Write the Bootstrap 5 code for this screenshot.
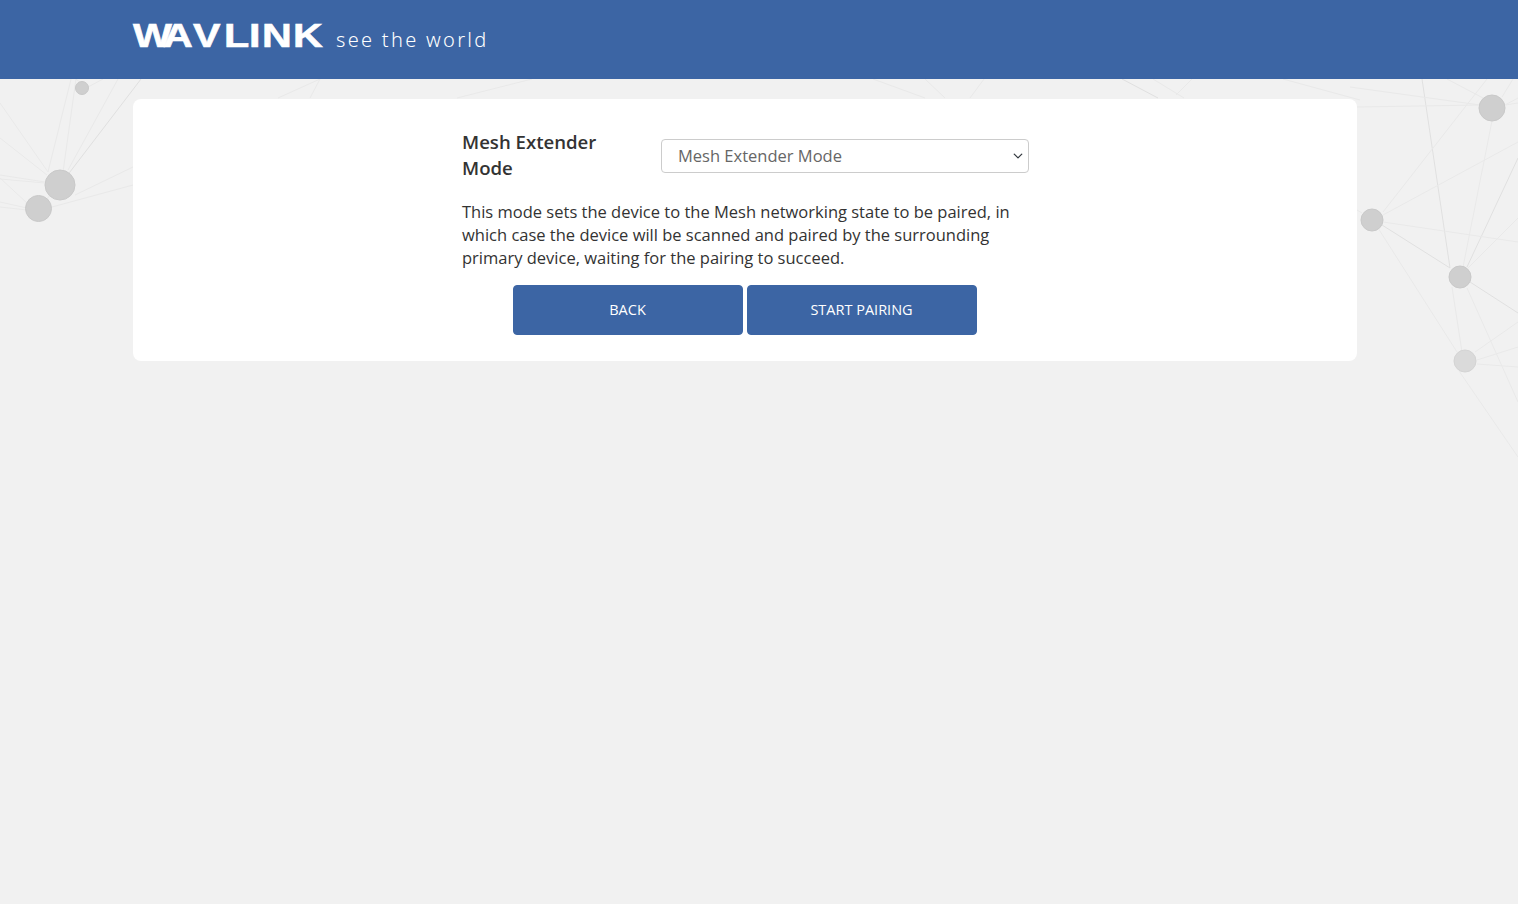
<!DOCTYPE html>
<html lang="en">
<head>
    <meta charset="UTF-8">
    <meta name="viewport" content="width=device-width, initial-scale=1.0">
    <title>Mesh Extender Mode</title>
    <link href="https://cdn.jsdelivr.net/npm/bootstrap@5.3.0/dist/css/bootstrap.min.css" rel="stylesheet">
    <style>
        body {
            background-color: #f1f1f1;
            font-family: "Open Sans", "Noto Sans", sans-serif;
            color: #333;
            min-height: 100vh;
        }
        .net-bg {
            position: absolute;
            top: 0;
            left: 0;
            width: 100%;
            height: 100%;
        }
        .net-bg line { stroke: #e9e9e9; stroke-width: 1; }
        .net-bg line.dark { stroke: #e0e0e0; }
        .net-bg circle { fill: #cfcfcf; stroke: #c9c9c9; stroke-width: 1; }
        .net-bg circle.pale { fill: #dadada; stroke: #d4d4d4; }
        .top-bar {
            height: 79px;
            background-color: #3c65a4;
        }
        .page-wrap {
            width: 1224px;
            margin-left: 133px;
        }
        .logo-mark {
            overflow: visible;
            margin-bottom: 8px;
            margin-right: 13px;
        }
        .logo-word {
            font-family: "Liberation Sans", sans-serif;
            font-weight: 700;
            font-size: 33px;
            fill: #fff;
            stroke: #fff;
            stroke-width: .6px;
        }
        .logo-tag {
            color: #fff;
            font-family: "Noto Sans", sans-serif;
            font-weight: 300;
            font-size: 20px;
            letter-spacing: 2.3px;
            margin-top: 1px;
        }
        .panel-box {
            margin-top: 20px;
            height: 262px;
            background: #fff;
            border-radius: 8px;
            padding-top: 30px;
        }
        .panel-inner {
            width: 567px;
            margin-left: 329px;
        }
        .mode-label {
            width: 199px;
            padding-right: 30px;
            font-size: 18.6px;
            font-weight: 600;
            line-height: 26px;
            color: #333;
        }
        .mode-select {
            width: 368px;
            height: 34px;
            margin-top: 10px;
            padding: 0 16px;
            font-size: 16.5px;
            color: #666;
            border-color: #ccc;
            border-radius: 4px;
            background-position: right 4px center;
            background-size: 12px 10px;
        }
        .mode-text {
            margin: 19px 0 16px;
            font-size: 16.5px;
            line-height: 23px;
            color: #333;
        }
        .btn-row { padding-right: 2px; }
        .act-btn {
            width: 230px;
            height: 50px;
            font-size: 14.5px;
            background-color: #3c65a4;
            border-color: #3c65a4;
            border-radius: 4px;
            color: #fff;
        }
    </style>
</head>
<body class="position-relative">
    <svg class="net-bg" viewBox="0 0 1518 904" preserveAspectRatio="xMinYMin slice" aria-hidden="true">
        <!-- left cluster -->
        <line class="dark" x1="60" y1="185" x2="141" y2="79"/>
        <line x1="48" y1="172" x2="71" y2="79"/>
        <line x1="63" y1="172" x2="76" y2="79"/>
        <line x1="68" y1="170" x2="118" y2="79"/>
        <line x1="0" y1="103" x2="48" y2="172"/>
        <line x1="0" y1="138" x2="47" y2="175"/>
        <line x1="0" y1="175" x2="45" y2="182"/>
        <line x1="0" y1="179" x2="45" y2="183"/>
        <line x1="0" y1="202" x2="27" y2="208"/>
        <line x1="0" y1="207" x2="27" y2="210"/>
        <line x1="0" y1="178" x2="27" y2="203"/>
        <line x1="52" y1="207" x2="133" y2="185"/>
        <line x1="75" y1="195" x2="133" y2="167"/>
        <line x1="88" y1="87" x2="103" y2="79"/>
        <line x1="76" y1="79" x2="82" y2="84"/>
        <line x1="38" y1="208" x2="60" y2="185"/>
        <!-- top strip -->
        <line x1="278" y1="98" x2="320" y2="79"/>
        <line x1="310" y1="98" x2="320" y2="79"/>
        <line x1="457" y1="98" x2="532" y2="79"/>
        <line x1="873" y1="79" x2="925" y2="98"/>
        <line x1="925" y1="79" x2="945" y2="98"/>
        <line x1="984" y1="79" x2="970" y2="98"/>
        <line class="dark" x1="1122" y1="79" x2="1158" y2="98"/>
        <line x1="1153" y1="79" x2="1184" y2="98"/>
        <line x1="1192" y1="79" x2="1176" y2="95"/>
        <line x1="1283" y1="79" x2="1360" y2="100"/>
        <!-- right cluster -->
        <line class="dark" x1="1422" y1="79" x2="1450" y2="268"/>
        <line x1="1350" y1="87" x2="1480" y2="105"/>
        <line x1="1357" y1="107" x2="1480" y2="105"/>
        <line x1="1447" y1="79" x2="1483" y2="98"/>
        <line x1="1487" y1="79" x2="1383" y2="212"/>
        <line x1="1513" y1="79" x2="1502" y2="97"/>
        <line x1="1505" y1="105" x2="1518" y2="98"/>
        <line x1="1505" y1="105" x2="1518" y2="103"/>
        <line x1="1492" y1="121" x2="1463" y2="267"/>
        <line x1="1518" y1="142" x2="1383" y2="215"/>
        <line class="dark" x1="1518" y1="158" x2="1467" y2="267"/>
        <line x1="1518" y1="218" x2="1468" y2="268"/>
        <line x1="1383" y1="222" x2="1518" y2="242"/>
        <line x1="1357" y1="210" x2="1362" y2="213"/>
        <line class="dark" x1="1382" y1="225" x2="1450" y2="268"/>
        <line x1="1378" y1="228" x2="1457" y2="352"/>
        <line x1="1452" y1="287" x2="1462" y2="352"/>
        <line class="dark" x1="1470" y1="282" x2="1518" y2="313"/>
        <line x1="1467" y1="288" x2="1518" y2="402"/>
        <line x1="1475" y1="352" x2="1518" y2="322"/>
        <line x1="1477" y1="360" x2="1518" y2="347"/>
        <line x1="1477" y1="364" x2="1518" y2="367"/>
        <line x1="1459" y1="371" x2="1518" y2="457"/>
        <circle cx="60" cy="185" r="15"/>
        <circle cx="38.5" cy="208.5" r="13"/>
        <circle cx="82" cy="88" r="6.5"/>
        <circle cx="1492" cy="108" r="13"/>
        <circle cx="1372" cy="220" r="11"/>
        <circle cx="1460" cy="277" r="11"/>
        <circle class="pale" cx="1465" cy="361" r="11"/>
    </svg>

    <header class="top-bar position-relative">
        <div class="page-wrap h-100 d-flex align-items-center">
            <svg width="190" height="30" viewBox="0 0 190 30" class="d-block logo-mark" role="img" aria-label="WAVLINK">
                <text class="logo-word" transform="scale(1.25 1)" x="0 24 48 72.8 92.8 103.2 128" y="26">WAVLINK</text>
            </svg>
            <span class="logo-tag">see the world</span>
        </div>
    </header>

    <main class="page-wrap position-relative">
        <div class="panel-box">
            <div class="panel-inner">
                <div class="d-flex">
                    <div class="mode-label">Mesh Extender Mode</div>
                    <select class="form-select mode-select">
                        <option>Mesh Extender Mode</option>
                    </select>
                </div>
                <p class="mode-text">This mode sets the device to the Mesh networking state to be paired, in which case the device will be scanned and paired by the surrounding primary device, waiting for the pairing to succeed.</p>
                <div class="d-flex justify-content-center gap-1 btn-row">
                    <button type="button" class="btn act-btn">BACK</button>
                    <button type="button" class="btn act-btn">START PAIRING</button>
                </div>
            </div>
        </div>
    </main>
    <script src="https://cdn.jsdelivr.net/npm/bootstrap@5.3.0/dist/js/bootstrap.bundle.min.js"></script>
</body>
</html>
